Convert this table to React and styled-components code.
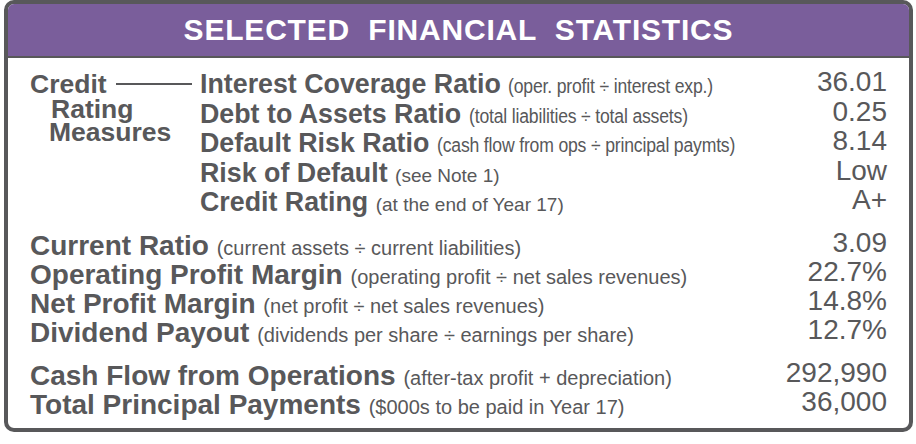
import React from 'react'
import styled, { createGlobalStyle } from 'styled-components'

const GlobalStyle = createGlobalStyle`
  html, body {
    margin: 0;
    padding: 0;
    background: #fff;
  }
  body {
    font-family: "Liberation Sans", Arial, Helvetica, sans-serif;
    color: #58585a;
  }
`;

const Card = styled.div`
  margin: 0 3px 0 4px;
  border: 4px solid #58585a;
  border-radius: 10px;
  overflow: hidden;
  background: #fff;
`;

const Header = styled.div`
  height: 52px;
  background: #7a5e9b;
  border-bottom: 2px solid #58585a;
  display: flex;
  align-items: center;
  justify-content: center;
  color: #fff;
  font-weight: bold;
  font-size: 30px;
  letter-spacing: 0.8px;
  white-space: pre;
`;

const Body = styled.div`
  padding: 12px 22px 9px 22px;
`;

const CreditBlock = styled.div`
  display: flex;
`;

const Side = styled.div`
  width: 170px;
  flex: none;
  font-weight: bold;
  font-size: 26.5px;
`;

const SideTop = styled.div`
  display: flex;
  align-items: center;
  line-height: 29.5px;
`;

const Rule = styled.div`
  flex: 1;
  height: 2px;
  background: #58585a;
  margin: 0 8px 0 9px;
  transform: translateY(-1px);
`;

const SideSub = styled.div`
  line-height: 23.5px;
  padding-left: ${p => p.$indent}px;
  margin-top: ${p => p.$first ? -2 : 0}px;
`;

const Rows = styled.div`
  flex: 1;
`;

const Section = styled.div`
  margin-top: ${p => p.$gap || 0}px;
`;

const Row = styled.div`
  display: flex;
  justify-content: space-between;
  height: ${p => p.$big ? 29.3 : 29.5}px;
  line-height: ${p => p.$big ? 29.3 : 29.5}px;
  white-space: nowrap;
`;

const Label = styled.div`
  font-weight: bold;
  font-size: ${p => p.$big ? 28 : 26.8}px;
`;

const Note = styled.span`
  font-weight: normal;
  font-size: ${p => p.$big ? 20 : 19}px;
`;

// the first three notes are set in a narrow face in the original
const NarrowNote = styled.span`
  display: inline-block;
  font-weight: normal;
  font-size: 20px;
  letter-spacing: -0.2px;
  transform: scaleX(0.88);
  transform-origin: left center;
`;

const Value = styled.div`
  align-self: flex-start;
  font-size: 28px;
  line-height: 24px;
  text-align: right;
`;

const creditRows = [
  { label: 'Interest Coverage Ratio', note: '(oper. profit ÷ interest exp.)', value: '36.01', condensed: true },
  { label: 'Debt to Assets Ratio', note: '(total liabilities ÷ total assets)', value: '0.25', condensed: true },
  { label: 'Default Risk Ratio', note: '(cash flow from ops ÷ principal paymts)', value: '8.14', condensed: true },
  { label: 'Risk of Default', note: '(see Note 1)', value: 'Low' },
  { label: 'Credit Rating', note: '(at the end of Year 17)', value: 'A+' },
];

const ratioRows = [
  { label: 'Current Ratio', note: '(current assets ÷ current liabilities)', value: '3.09' },
  { label: 'Operating Profit Margin', note: '(operating profit ÷ net sales revenues)', value: '22.7%' },
  { label: 'Net Profit Margin', note: '(net profit ÷ net sales revenues)', value: '14.8%' },
  { label: 'Dividend Payout', note: '(dividends per share ÷ earnings per share)', value: '12.7%' },
];

const cashRows = [
  { label: 'Cash Flow from Operations', note: '(after-tax profit + depreciation)', value: '292,990' },
  { label: 'Total Principal Payments', note: '($000s to be paid in Year 17)', value: '36,000' },
];

function StatRow({ row, big }) {
  return (
    <Row $big={big}>
      <Label $big={big}>
        {row.label}{' '}
        {row.condensed
          ? <NarrowNote>{row.note}</NarrowNote>
          : <Note $big={big}>{row.note}</Note>}
      </Label>
      <Value>{row.value}</Value>
    </Row>
  );
}

export default function App() {
  return (
    <>
      <GlobalStyle />
      <Card>
        <Header>{'SELECTED  FINANCIAL  STATISTICS'}</Header>
        <Body>
          <CreditBlock>
            <Side>
              <SideTop>
                <span>Credit</span>
                <Rule />
              </SideTop>
              <SideSub $indent={21} $first>Rating</SideSub>
              <SideSub $indent={19}>Measures</SideSub>
            </Side>
            <Rows>
              {creditRows.map(row => <StatRow key={row.label} row={row} />)}
            </Rows>
          </CreditBlock>

          <Section $gap={13}>
            {ratioRows.map(row => <StatRow key={row.label} row={row} big />)}
          </Section>

          <Section $gap={13}>
            {cashRows.map(row => <StatRow key={row.label} row={row} big />)}
          </Section>
        </Body>
      </Card>
    </>
  );
}
